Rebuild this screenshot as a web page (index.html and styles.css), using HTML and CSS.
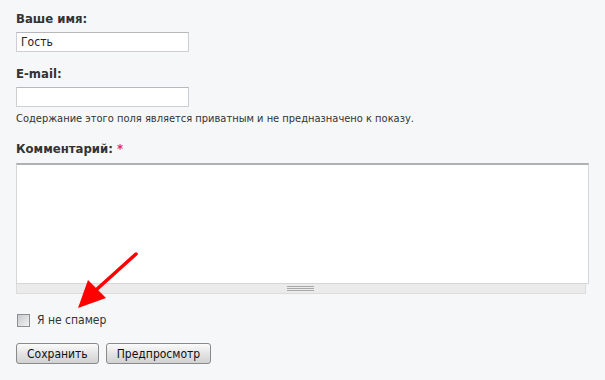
FILE: index.html
```html
<!DOCTYPE html>
<html lang="ru">
<head>
    <meta charset="UTF-8">
    <title>Комментарий</title>
    <link rel="stylesheet" href="styles.css">
</head>
<body>
    <form class="comment-form">
        <div class="form-item">
            <label for="name">Ваше имя:</label>
            <input type="text" id="name" class="form-text" value="Гость">
        </div>

        <div class="form-item mail">
            <label for="mail">E-mail:</label>
            <input type="text" id="mail" class="form-text">
            <div class="description">Содержание этого поля является приватным и не предназначено к показу.</div>
        </div>

        <div class="form-item comment">
            <label for="comment">Комментарий: <span class="required">*</span></label>
            <div class="resizable">
                <textarea id="comment"></textarea>
                <div class="grippie"></div>
            </div>
        </div>

        <div class="form-checkbox">
            <input type="checkbox" id="spam">
            <label for="spam">Я не спамер</label>
        </div>

        <div class="actions">
            <button type="button">Сохранить</button>
            <button type="button">Предпросмотр</button>
        </div>

        <!-- red arrow pointing at the checkbox -->
        <svg class="arrow" width="70" height="64" viewBox="0 0 70 64">
            <line x1="66" y1="4" x2="26" y2="40" stroke="#f00" stroke-width="3.5" stroke-linecap="round"/>
            <polygon points="8,58 18,30 36,48" fill="#f00"/>
        </svg>
    </form>
</body>
</html>
```

FILE: styles.css
```css
body {
    margin: 0;
    padding: 11px 16px;
    background: #f6f7f9;
    font-family: "DejaVu Sans Condensed", "DejaVu Sans", sans-serif;
    font-size: 12px;
    color: #222;
}

.comment-form {
    position: relative;
}

.form-item {
    margin-bottom: 14px;
}

.form-item.mail {
    margin-bottom: 16px;
}

.form-item > label {
    display: block;
    font-weight: bold;
    font-size: 13px;
    line-height: 16px;
    color: #333;
    margin-bottom: 5px;
}

.form-item.comment > label {
    margin-bottom: 6px;
}

.required {
    color: #e0306a;
}

.form-text {
    display: block;
    box-sizing: border-box;
    width: 173px;
    height: 20px;
    margin: 0;
    padding: 1px 4px;
    border: 1px solid #cfcfd3;
    border-top-color: #b7b7bc;
    background: #fff;
    font-family: inherit;
    font-size: 12px;
    color: #222;
}

.description {
    font-size: 11px;
    line-height: 13px;
    color: #333;
    margin-top: 5px;
}

.resizable {
    width: 573px;
}

.resizable textarea {
    display: block;
    box-sizing: border-box;
    width: 573px;
    height: 121px;
    margin: 0;
    border: 1px solid #d5d5da;
    border-top: 2px solid #b0b0b5;
    background: #fff;
    resize: none;
}

.grippie {
    box-sizing: border-box;
    width: 570px;
    height: 10px;
    background: #ebebeb;
    border: 1px solid #dcdcdc;
    border-top: none;
    position: relative;
}

.grippie::after {
    content: "";
    position: absolute;
    left: 270px;
    top: 2px;
    width: 27px;
    height: 5px;
    background: repeating-linear-gradient(#a9a9a9 0 1px, transparent 1px 2px);
}

.form-checkbox {
    display: flex;
    align-items: center;
    gap: 7px;
    margin-top: 19px;
    margin-bottom: 16px;
    font-size: 12px;
    line-height: 14px;
    color: #333;
}

.form-checkbox input {
    appearance: none;
    width: 13px;
    height: 13px;
    margin: 0 0 0 1px;
    border: 1px solid #8e8f92;
    background: linear-gradient(135deg, #c8c9cc, #f2f2f2);
}

.actions {
    display: flex;
    gap: 7px;
}

.actions button {
    height: 21px;
    padding: 0 10px;
    border: 1px solid #8a8a8a;
    border-radius: 3px;
    background: linear-gradient(#fbfbfb, #e2e2e2 55%, #d2d2d2);
    font-family: inherit;
    font-size: 12px;
    color: #111;
}

.arrow {
    position: absolute;
    left: 54px;
    top: 239px;
}
```
